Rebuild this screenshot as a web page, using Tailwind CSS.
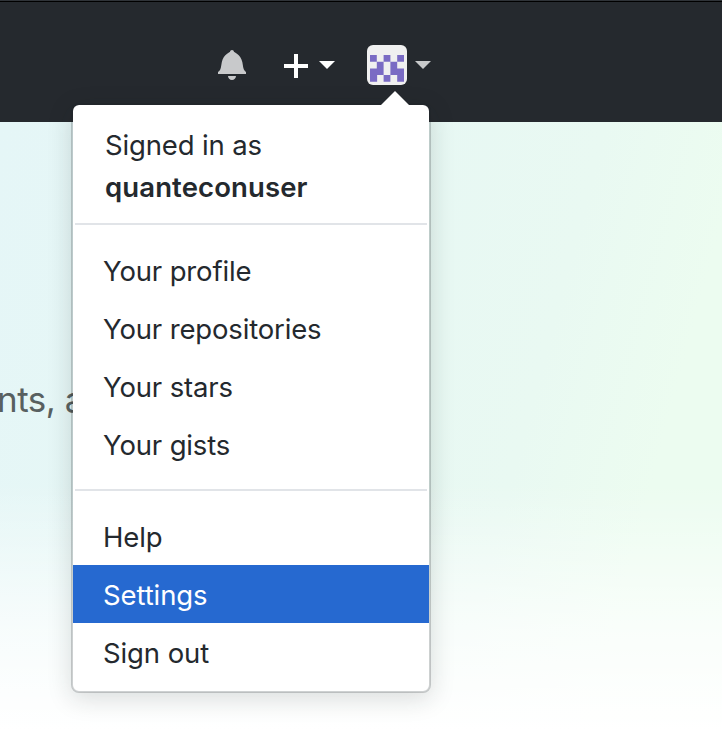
<!DOCTYPE html>
<html lang="en">
<head>
<meta charset="utf-8">
<title>Account menu</title>
<script src="https://cdn.jsdelivr.net/npm/@tailwindcss/browser@4"></script>
</head>
<body class="relative h-[756px] w-[722px] overflow-hidden bg-white font-['Inter','Liberation_Sans',sans-serif] text-[27.5px] text-[#24292e]">
<header class="flex h-[122px] items-start border-t border-[#2f3338] bg-[#25292e] pl-[218px] shadow-[inset_0_1px_0_#000000]">
  <svg class="mt-[47px] h-8 w-7 shrink-0" viewBox="0 0 14 16" fill="#c8c9cb" aria-label="Notifications"><path d="M14 12v1H0v-1l.73-.58c.77-.77.81-2.55 1.19-4.42C2.69 3.23 6 2 6 2c0-.55.45-1 1-1s1 .45 1 1c0 0 3.39 1.23 4.16 5 .38 1.88.42 3.66 1.19 4.42l.66.58H14zm-7 4c1.11 0 2-.89 2-2H5c0 1.11.89 2 2 2z"/></svg>
  <svg class="mt-[53px] ml-[38px] size-6 shrink-0" viewBox="0 0 24 24" fill="#fff" aria-label="Create new"><path d="M10 0h4v10h10v4H14v10h-4V14H0v-4h10z"/></svg>
  <svg class="mt-[60px] ml-[11px] h-2 w-4 shrink-0" viewBox="0 0 16 8" fill="#fff"><path d="M0 0h16L8 8z"/></svg>
  <svg class="mt-[44px] ml-8 size-10 shrink-0 rounded-[6px] bg-[#f0f0f0]" viewBox="0 0 40 40" aria-label="Profile picture">
    <g fill="#7a6bc4" transform="translate(3 10) scale(6.8 6.7)"><path d="M0 0h1v1H0zM2 0h1v1H2zM4 0h1v1H4zM1 1h1v2H1zM3 1h1v2H3zM0 2h1.05v2H0zM3.95 2H5v2H4V3zM2 3h1v1H2z"/></g>
  </svg>
  <svg class="mt-[60px] ml-2 h-2 w-4 shrink-0" viewBox="0 0 16 8" fill="#c8c9cb"><path d="M0 0h16L8 8z"/></svg>
</header>
<main class="h-[634px] overflow-hidden bg-[linear-gradient(180deg,#ffffff00_57%,#ffffffb3_80%,#ffffff_96%),linear-gradient(105deg,#e5f6f7_0%,#e6f7f5_30%,#e9f9f2_68%,#ecfcf0_84%,#ecfcf0_100%)]">
  <p class="mt-[255px] ml-[-3px] text-[35px] leading-[44px] tracking-[-0.5px] whitespace-nowrap text-[#586060]">nts, and</p>
</main>
<nav class="absolute top-[103px] left-[71px] h-[590px] w-[360px] rounded-[8px] border-2 border-[#1b1f23]/20 bg-white bg-clip-padding pt-[19px] shadow-[0_6px_24px_rgba(27,31,35,0.15)]">
  <svg class="absolute -top-[14px] left-[307px] h-[15px] w-[30px]" viewBox="0 0 30 15" fill="#fff"><path d="M0 15L15 0l15 15z"/></svg>
  <div class="pl-8 leading-[42px]">
    <div class="tracking-[-0.15px]">Signed in as</div>
    <strong class="block font-semibold tracking-[0.12px]">quanteconuser</strong>
  </div>
  <hr class="mx-[2px] mt-[15px] mb-[17px] border-t-2 border-[#e1e4e8]">
  <ul class="leading-[58px] tracking-[-0.15px]">
    <li class="pl-[30px]">Your profile</li>
    <li class="pl-[30px]">Your repositories</li>
    <li class="pl-[30px]">Your stars</li>
    <li class="pl-[30px]">Your gists</li>
  </ul>
  <hr class="mx-[2px] mt-[15px] mb-4 border-t-2 border-[#e1e4e8]">
  <ul class="leading-[60px] tracking-[-0.1px]">
    <li class="h-[58px] pl-[30px]">Help</li>
    <li class="h-[58px] bg-[#2669d0] pl-[30px] text-white">Settings</li>
    <li class="h-[58px] pl-[30px]">Sign out</li>
  </ul>
</nav>
</body>
</html>
